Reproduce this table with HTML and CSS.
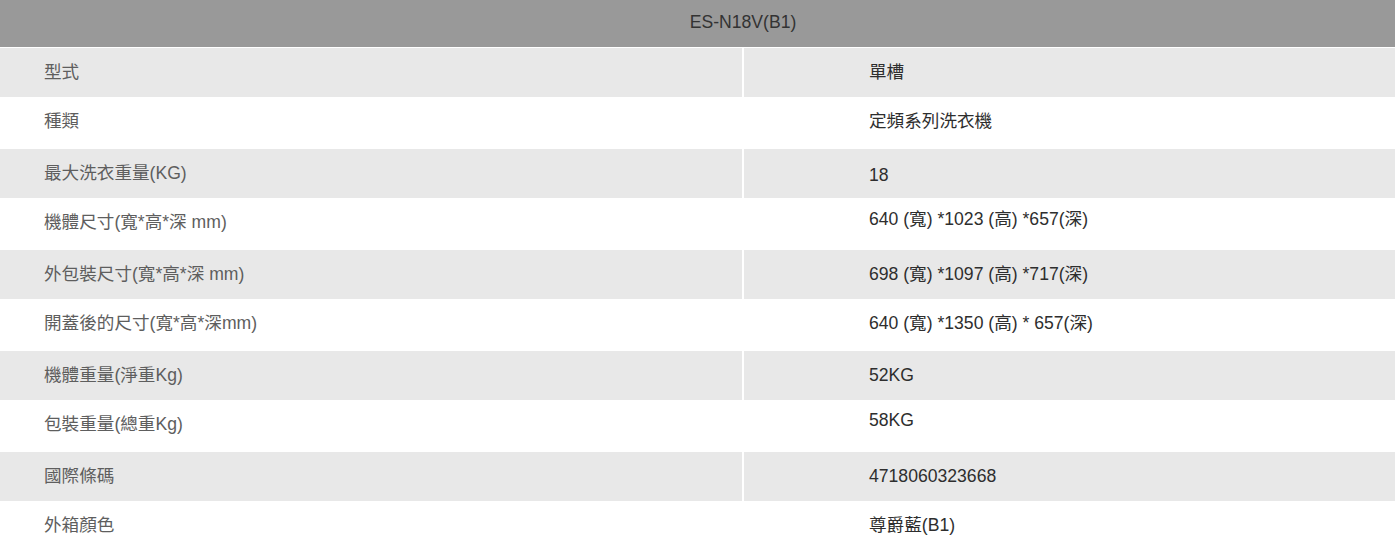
FILE: index.html
```html
<!DOCTYPE html>
<html lang="zh-Hant">
<head>
<meta charset="utf-8">
<title>ES-N18V(B1) 規格</title>
<link rel="stylesheet" href="styles.css">
</head>
<body>
<div class="spec">
  <div class="spec-head">ES-N18V(B1)</div>
  <div class="spec-row shade">
    <div class="cell label">型式</div>
    <div class="cell value">單槽</div>
  </div>
  <div class="spec-row">
    <div class="cell label">種類</div>
    <div class="cell value">定頻系列洗衣機</div>
  </div>
  <div class="spec-row shade">
    <div class="cell label">最大洗衣重量(KG)</div>
    <div class="cell value shift-down">18</div>
  </div>
  <div class="spec-row">
    <div class="cell label">機體尺寸(寬*高*深 mm)</div>
    <div class="cell value shift-up">640 (寬) *1023 (高) *657(深)</div>
  </div>
  <div class="spec-row shade">
    <div class="cell label">外包裝尺寸(寬*高*深 mm)</div>
    <div class="cell value">698 (寬) *1097 (高) *717(深)</div>
  </div>
  <div class="spec-row">
    <div class="cell label">開蓋後的尺寸(寬*高*深mm)</div>
    <div class="cell value">640 (寬) *1350 (高) * 657(深)</div>
  </div>
  <div class="spec-row shade">
    <div class="cell label">機體重量(淨重Kg)</div>
    <div class="cell value">52KG</div>
  </div>
  <div class="spec-row">
    <div class="cell label">包裝重量(總重Kg)</div>
    <div class="cell value shift-up-more">58KG</div>
  </div>
  <div class="spec-row shade">
    <div class="cell label">國際條碼</div>
    <div class="cell value">4718060323668</div>
  </div>
  <div class="spec-row">
    <div class="cell label">外箱顏色</div>
    <div class="cell value">尊爵藍(B1)</div>
  </div>
</div>
</body>
</html>
```

FILE: styles.css
```css
html, body {
  margin: 0;
  padding: 0;
  background: #ffffff;
}

body {
  font-family: "Liberation Sans", Arial, "Noto Sans CJK TC", sans-serif;
  font-size: 17.6px;
  overflow: hidden;
}

.spec {
  width: 1395px;
  display: flex;
  flex-direction: column;
}

.spec-head {
  height: 47px;
  line-height: 45px;
  background: #999999;
  color: #333333;
  text-align: center;
  padding-left: 91px;
  margin-bottom: 1px;
}

.spec-row {
  display: grid;
  grid-template-columns: 742px 1fr;
  column-gap: 2px;
  height: 52px;
  background: #ffffff;
}

.spec-row.shade {
  height: 49px;
}

.spec-row.shade .cell {
  background: #e8e8e8;
}

.cell {
  line-height: 20px;
  padding-top: 14px;
  box-sizing: border-box;
}

.label {
  padding-left: 44px;
  color: #5e5e5e;
}

.value {
  padding-left: 125px;
  color: #2e2e2e;
}

.value.shift-down {
  padding-top: 16px;
}

.value.shift-up {
  padding-top: 11px;
}

.value.shift-up-more {
  padding-top: 10px;
}
```
